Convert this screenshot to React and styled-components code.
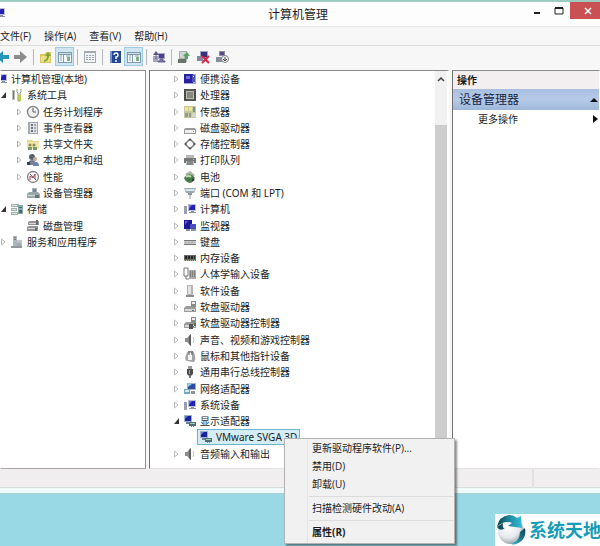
import styled, { createGlobalStyle } from "styled-components";

const GlobalStyle = createGlobalStyle`
    * {
        box-sizing: border-box;
    }
    body {
        margin: 0;
        background-color: #98d9e5;
        color: #1c1c1c;
        font-family: "Open Sans", "Noto Sans CJK SC", sans-serif;
        font-size: 10px;
        line-height: 16px;
    }
    button {
        padding: 0;
        border: 0;
        background: none;
        color: inherit;
        font: inherit;
    }
    svg {
        display: block;
        flex: none;
    }
`;

const Desktop = styled.div`
    position: relative;
    display: flex;
    flex-direction: column;
    min-height: 100vh;
    padding-bottom: 52px;
    overflow: hidden;
`;

const Window = styled.main`
    flex: 1;
    display: flex;
    flex-direction: column;
    border-top: 2px solid #9ccbc0;
    border-bottom: 1px solid #a9cfca;
    background-color: #f7f7f8;
`;

const TitleBar = styled.header`
    display: grid;
    grid-template-columns: 1fr auto 1fr;
    height: 25px;
    border-bottom: 1px solid #e6e6e6;
    background-color: #fdfdfd;
    h1 {
        margin: 0;
        padding-right: 4px;
        font-size: 12px;
        font-weight: 400;
        line-height: 25px;
    }
    .app-icon {
        margin: 4px 0 0 -8px;
    }
    .controls {
        display: flex;
        justify-content: flex-end;
        align-items: flex-start;
    }
`;

const WindowButton = styled.button`
    display: grid;
    place-items: center;
    width: ${(props) => (props.$close ? "30px" : "22px")};
    height: 17px;
    padding-left: ${(props) => (props.$close ? "6px" : "0")};
    background-color: ${(props) => (props.$close ? "#c95154" : "transparent")};
`;

const MenuBar = styled.nav`
    display: flex;
    gap: 13px;
    height: 19px;
    border-bottom: 1px solid #dcdcdc;
    button {
        line-height: 18px;
    }
`;

const ToolBar = styled.div`
    display: flex;
    align-items: center;
    height: 24px;
    padding-bottom: 3px;
    margin-left: -8px;
`;

const ToolButton = styled.button`
    display: grid;
    place-items: center;
    width: 19px;
    height: 19px;
    border: 1px solid ${(props) => (props.$active ? "#9fcbe2" : "transparent")};
    background-color: ${(props) => (props.$active ? "#cfe6f2" : "transparent")};
`;

const ToolDivider = styled.span`
    width: 1px;
    height: 16px;
    margin: 0 2px 0 3px;
    background-color: #b4b8bd;
`;

const Panes = styled.div`
    flex: 1;
    display: flex;
    gap: 3px;
`;

const Pane = styled.section`
    display: flex;
    flex: ${(props) => props.$flex};
    min-width: 0;
    padding-bottom: 6px;
    padding-left: ${(props) => props.$inset || "0"};
    border-top: 1px solid #8b8b8b;
    border-right: 1px solid ${(props) => (props.$rightEdge ? "#8b8b8b" : "#ffffff")};
    border-left: 1px solid ${(props) => (props.$leftEdge ? "#6f6f6f" : "#ffffff")};
    border-bottom: 1px solid ${(props) => (props.$rightEdge ? "#a8a8a8" : "#e4e4e4")};
    background-color: #ffffff;
    overflow: hidden;
`;

const Tree = styled.ul`
    flex: 1;
    display: grid;
    grid-template-rows: repeat(24, 1fr);
    min-width: 0;
    margin: 0;
    padding: 0;
    font-family: "Noto Sans", "Noto Sans CJK SC", sans-serif;
    list-style: none;
`;

const TreeRow = styled.li`
    display: flex;
    align-items: center;
    height: 16px;
    padding-left: ${(props) => props.$level * 16}px;
    white-space: nowrap;
`;

const ShiftedTree = styled(Tree)`
    margin-left: -19px;
`;

const Expander = styled.span`
    flex: none;
    width: 12px;
    padding-left: 3px;
`;

const RowLabel = styled.span`
    display: flex;
    align-items: center;
    gap: 3px;
    height: 16px;
    margin-left: ${(props) => (props.$selected ? "-2px" : "0")};
    padding: ${(props) => (props.$selected ? "0 2px 0 1px" : "0")};
    border: ${(props) => (props.$selected ? "1px solid #69b7cd" : "0")};
    background-color: ${(props) => (props.$selected ? "#d3ecf5" : "transparent")};
`;

const ScrollBar = styled.div`
    display: flex;
    flex-direction: column;
    width: 12px;
    margin: 0 1px -6px 0;
    background-color: #f1f1f1;
    button {
        display: grid;
        place-items: center;
        height: 17px;
    }
    .track {
        flex: 1;
        padding: 37px 0 26px;
    }
    .thumb {
        height: 100%;
        background-color: #cdcdcd;
    }
`;

const Actions = styled.div`
    flex: 1;
    h2 {
        margin: 0;
        padding-left: 4px;
        background-color: #f3eff0;
        font-size: 10px;
        line-height: 18px;
    }
`;

const ActionGroup = styled.button`
    display: flex;
    align-items: center;
    justify-content: space-between;
    width: 100%;
    height: 21px;
    padding: 0 1px 0 6px;
    background: linear-gradient(#a9bfdf, #b6cae8 50%, #9db8da);
    color: #16263f;
    font-size: 12px;
`;

const ActionItem = styled.button`
    display: flex;
    align-items: center;
    justify-content: space-between;
    width: 100%;
    height: 18px;
    padding: 0 1px 0 25px;
`;

const StatusBar = styled.footer`
    display: flex;
    height: 24px;
    border-bottom: 5px solid #effbfb;
    background-color: #f0eeef;
    box-shadow: inset 0 -1px #d6dcdb;
    span {
        flex: 1;
        border-right: 2px solid #e2e0e1;
    }
    span:last-child {
        flex: none;
        width: 66px;
        border: 0;
    }
`;

const ContextMenu = styled.div`
    position: absolute;
    top: 438px;
    left: 284px;
    display: flex;
    flex-direction: column;
    width: 171px;
    padding-bottom: 2px;
    border: 1px solid #b2b2b2;
    background: linear-gradient(90deg, #f1f1f1 22px, #e4e4e4 22px, #e4e4e4 23px, #f1f1f1 23px);
    box-shadow: 2px 2px 2px rgba(0, 0, 0, 0.45);
    hr {
        width: 145px;
        height: 1px;
        margin: 3px 0 2px 24px;
        border: 0;
        background-color: #dcdcdc;
    }
`;

const MenuItem = styled.button`
    && {
        padding-left: 27px;
        font-weight: ${(props) => (props.$strong ? "700" : "400")};
        line-height: 18px;
        text-align: left;
    }
`;

const Brand = styled.div`
    position: absolute;
    right: 0;
    bottom: 0;
    display: flex;
    align-items: center;
    gap: 2px;
    width: 105px;
    height: 32px;
    padding-left: 1px;
    background-color: #ffffff;
    color: #159cb9;
    font-size: 18px;
    font-weight: 700;
    white-space: nowrap;
    overflow: hidden;
`;

const monitor = (
    <>
        <path d="M5 2h8v7H5z" fill="#b9bfd6" />
        <path d="M6 3h6v5H6z" fill="#2420b4" />
        <path d="M6 3h3l-3 4z" fill="#6c6be0" />
        <path d="M8 9h3v1h2v1H6v-1h2z" fill="#8b90a4" />
    </>
);

const adapter = (
    <>
        <path d="M1 1h8v7H1z" fill="#9fb0c8" />
        <path d="M2 2h6v5H2z" fill="#15219e" />
        <path d="M2 2h3L2 5z" fill="#5a78dc" />
        <path d="M3 8h4v2H3z" fill="#70808e" />
        <path d="M6 8h7v4H6z" fill="#536b73" />
        <path d="M7 9h5v1H7z" fill="#9fd0b4" />
        <path d="M8 12h1v1H8zM10 12h1v1h-1z" fill="#9b8a40" />
    </>
);

const floppy = (
    <>
        <path d="M1 8l2-2h9l1 2v4H1z" fill="#9b9b9b" />
        <path d="M2 9h10v2H2z" fill="#d8d8d8" />
        <path d="M8 1h5v6H8z" fill="#8a8a8a" />
        <path d="M9 2h3v2H9z" fill="#eeeeee" />
        <path d="M9 10h2v1H9z" fill="#5d7b63" />
    </>
);

const speaker = (
    <>
        <path d="M2 5h2l4-4v12L4 9H2z" fill="#8d8d8d" />
        <path d="M6 3l2-2v12l-2-2z" fill="#5e5e5e" />
        <path d="M10 4q2 3 0 6" fill="none" stroke="#c4c4c4" />
    </>
);

const icons = {
    computer: (
        <>
            {monitor}
            <path d="M1 4h3v8H1z" fill="#9a9fb0" />
            <path d="M2 5h1v1H2z" fill="#46c16b" />
        </>
    ),
    tools: (
        <>
            <path d="M2 2h3v10H2z" fill="#b7bcb7" />
            <path d="M3 3h1v8H3z" fill="#6f7a72" />
            <path d="M7 1v3l1 1v8h2V5l1-1V1" fill="none" stroke="#8d948e" />
            <path d="M8 7h3v6H8z" fill="#b9c64d" />
        </>
    ),
    clock: (
        <>
            <circle cx="7" cy="7" r="5.5" fill="#f2f2f2" stroke="#858585" strokeWidth="1.4" />
            <path d="M7 3v4h3" fill="none" stroke="#555" />
        </>
    ),
    events: (
        <>
            <path d="M2 1h10v12H2z" fill="#a4a9b2" />
            <path d="M4 2h7v10H4z" fill="#e0e3ea" />
            <path d="M5 3h2v2H5zM5 6h2v2H5zM5 9h2v2H5z" fill="#6f7483" />
            <path d="M8 4h2M8 7h2M8 10h2" stroke="#777" />
        </>
    ),
    folder: (
        <>
            <path d="M1 3h5l1 1h6v8H1z" fill="#e5d98a" />
            <path d="M1 5h12v7H1z" fill="#efe7ad" />
            <circle cx="4" cy="8" r="1.5" fill="#8d8a58" />
            <circle cx="8" cy="8" r="1.5" fill="#8d8a58" />
            <path d="M2 10h4v3H2zM7 10h4v3H7z" fill="#7c9a6a" />
        </>
    ),
    users: (
        <>
            <circle cx="6" cy="4" r="3" fill="#59636c" />
            <circle cx="9" cy="6" r="2" fill="#c4ac96" />
            <path d="M2 12q0-5 4-5t4 5z" fill="#777f98" />
            <path d="M7 13q0-4 3-4t3 4z" fill="#6b84ad" />
            <path d="M1 9h3v3H1z" fill="#333f6b" />
        </>
    ),
    performance: (
        <>
            <circle cx="7" cy="7" r="5.5" fill="#fafafa" stroke="#8b8086" strokeWidth="1.3" />
            <path d="M4 10V6l3 2 2-4v5" fill="none" stroke="#a3475b" />
            <path d="M4 4l6 6" stroke="#6c6c78" />
        </>
    ),
    device: (
        <>
            <path d="M6 2h5v6H6z" fill="#a5b1b4" />
            <path d="M7 3h3v3H7z" fill="#728a95" />
            <path d="M1 8l2-2h9l2 2v4H1z" fill="#9aa8aa" />
            <path d="M2 9h8v1H2z" fill="#d6dede" />
            <path d="M9 9h4v3H9z" fill="#68777a" />
        </>
    ),
    storage: (
        <>
            <path d="M1 2h8v3H1zM1 6h6v3H1zM1 10h7v3H1z" fill="#9cb3ad" />
            <path d="M2 3h5v1H2zM2 7h4v1H2zM2 11h5v1H2z" fill="#dce8e4" />
            <path d="M8 3h5v9H8z" fill="#8ca9a7" />
            <path d="M9 5h3v1H9zM9 8h3v3H9z" fill="#426d6b" />
        </>
    ),
    disks: (
        <>
            <path d="M2 3l2-1h9v4H2zM1 8l2-1h9v5H1z" fill="#949494" />
            <path d="M3 4h7v1H3zM2 9h7v1H2z" fill="#d9d9d9" />
            <path d="M10 1h2v5h-2zM9 9h2v3H9z" fill="#696969" />
        </>
    ),
    services: (
        <>
            <path d="M3 1h4v10H3z" fill="#afb5b9" />
            <path d="M4 2h2v1H4zM4 4h2v1H4z" fill="#737a80" />
            <path d="M7 5h5v8H7z" fill="#c2c7cb" />
            <circle cx="9" cy="10" r="2.5" fill="#a2abb0" />
            <path d="M1 11h11v2H1z" fill="#92999e" />
        </>
    ),
    portable: (
        <>
            <path d="M1 2h12v10H1z" fill="#a1a3d4" />
            <path d="M1 2h9v9H1z" fill="#27219f" />
            <path d="M3 4h4v3H3z" fill="#6f70dd" />
            <path d="M9 3h3v7H9z" fill="#4f54ac" />
            <path d="M10 4h1v1h-1z" fill="#f4f4f4" />
        </>
    ),
    cpu: (
        <>
            <path d="M1 1h12v12H1z" fill="#5a5a55" />
            <path d="M3 3h8v8H3z" fill="#b7b8b1" />
            <path d="M4 4h6v6H4z" fill="#87887f" />
            <path d="M2 1v12M12 1v12" stroke="#252525" strokeDasharray="1 1" />
        </>
    ),
    sensor: (
        <>
            <path d="M1 1h12v12H1z" fill="#c4c8a5" />
            <path d="M2 2h3v4H2zM6 2h3v4H6z" fill="#efe97b" />
            <path d="M10 2h2v5h-2z" fill="#849182" />
            <path d="M2 8h3v4H2zM6 8h2v4H6z" fill="#939d89" />
            <path d="M9 8h4v4H9z" fill="#d7d7c8" />
        </>
    ),
    drive: (
        <>
            <path d="M1 9q0-2 2-2h8q2 0 2 2v4H1z" fill="#999" />
            <path d="M2 9h10v3H2z" fill="#eeeeee" />
            <path d="M10 10h1v1h-1z" fill="#55a45c" />
        </>
    ),
    controller: (
        <>
            <path d="M7 1l6 6-6 6-6-6z" fill="#777" />
            <path d="M7 3l4 4-4 4-4-4z" fill="#ffffff" />
            <path d="M2 7h2M10 7h2M7 2v2M7 10v2" stroke="#333" />
        </>
    ),
    printer: (
        <>
            <path d="M3 2h8v4H3z" fill="#b9b9b9" />
            <path d="M1 5h12v5H1z" fill="#747874" />
            <path d="M3 8h8v4H3z" fill="#b8beb8" />
            <path d="M4 9h6M4 11h6" stroke="#555" />
            <path d="M10 6h1v1h-1z" fill="#91db94" />
        </>
    ),
    battery: (
        <>
            <path d="M2 4l5-3 5 4-4 4z" fill="#a8b5a8" />
            <path d="M1 8q3-5 8-3l3 3-4 5q-5 0-7-5z" fill="#487a49" />
            <path d="M3 7q3-2 5 0" fill="none" stroke="#b9deb5" strokeWidth="2" />
            <path d="M9 8l3 2-3 2" fill="#343d35" />
        </>
    ),
    port: (
        <>
            <path d="M1 2h12l-2 5H3z" fill="#9ca9b1" />
            <path d="M2 3h10l-1 2H3z" fill="#d5e5ec" />
            <path d="M5 7h4v2H5z" fill="#8c979e" />
            <path d="M6 9h2v4H6z" fill="#c3ccd0" />
        </>
    ),
    monitor: (
        <>
            <path d="M1 1h8v9H1z" fill="#1d1797" />
            <path d="M2 2h3L2 6z" fill="#5d5ed8" />
            <path d="M7 5h6v5H7z" fill="#4b4ebb" />
            <path d="M3 10h4v2H3zM8 10h5v2H8z" fill="#8c91a4" />
        </>
    ),
    keyboard: (
        <>
            <path d="M1 5h12v5H1z" fill="#c9c9c9" />
            <path d="M1 5.5h12M1 9.5h12" stroke="#777" />
            <path d="M2 7.5h10" stroke="#a5a5a5" strokeDasharray="2 1" />
        </>
    ),
    memory: (
        <>
            <path d="M1 4h12v6H1z" fill="#666b66" />
            <path d="M2 5h2v3H2zM5 5h2v3H5zM8 5h2v3H8zM11 5h1v3h-1z" fill="#252825" />
            <path d="M1 9.5h12" stroke="#bcbcaa" strokeDasharray="1 1" />
        </>
    ),
    hid: (
        <>
            <path d="M1 1h4v8H1z" fill="none" stroke="#777" />
            <path d="M3 9v3h3" fill="none" stroke="#777" />
            <path d="M6 3h7v9H6z" fill="#aaaaaa" />
            <path d="M7 5h5M7 7h5M7 9h5" stroke="#555" strokeDasharray="1 1" />
        </>
    ),
    software: (
        <>
            <path d="M4 1h6v11H4z" fill="#b4b4b4" />
            <path d="M5 2h3v8H5z" fill="#e2e2e2" />
            <path d="M3 11h8v2H3z" fill="#8c8c8c" />
        </>
    ),
    floppy,
    floppyController: (
        <>
            {floppy}
            <path d="M6 8h4v5H6z" fill="#555" />
            <path d="M11 7h2v3h-2z" fill="#4e7158" />
        </>
    ),
    speaker,
    mouse: (
        <>
            <path d="M4 12q-3-1-1-6t4-4q4-1 5 5t-2 6z" fill="#a2a2a2" />
            <path d="M5 11V5q2-3 4 0v6z" fill="#f5f5f5" />
            <path d="M6 2v4M9 2v4" stroke="#555" />
        </>
    ),
    usb: (
        <>
            <path d="M5 1h4v3H5z" fill="#999" />
            <path d="M4 4h6v5l-2 2H6L4 9z" fill="#4d4d4d" />
            <path d="M7 10v3" stroke="#777" strokeWidth="2" />
            <path d="M6 5h1v4H6z" fill="#9b9b9b" />
        </>
    ),
    network: (
        <>
            <path d="M4 1h9v7H4z" fill="#9fb6c8" />
            <path d="M5 2h7v5H5z" fill="#2b4aa5" />
            <path d="M5 2h4L5 5z" fill="#8fd0ec" />
            <path d="M1 7h6v5H1z" fill="#71a6bb" />
            <path d="M2 8h4v2H2z" fill="#d0edf1" />
            <path d="M8 9h4v3H8z" fill="#8c9498" />
        </>
    ),
    adapter,
    back: <path d="M14 5H8V1L1 7l7 6V9h6z" fill="#2796bd" />,
    forward: <path d="M0 5h6V1l7 6-7 6V9H0z" fill="#8b8b8b" />,
    up: (
        <>
            <path d="M1 4h5l1-2h5v11H1z" fill="#d9c65c" />
            <path d="M2 6h9v6H2z" fill="#f0df82" />
            <path d="M5 10q3 0 3-4H6l3-4 3 4h-2q0 5-5 6z" fill="#7aa23a" />
        </>
    ),
    panes: (
        <>
            <path d="M0 2h14v11H0z" fill="#7f9aaa" />
            <path d="M1 5h4v7H1zM6 5h7v7H6z" fill="#f6fbfd" />
            <path d="M1 3h12v1H1z" fill="#cce0e8" />
            <path d="M2 6h2M2 8h2M2 10h2M8 6h4" stroke="#87a3ae" />
            <path d="M9 7h3v4H9z" fill="#7fb183" />
        </>
    ),
    list: (
        <>
            <path d="M1 1h12v12H1z" fill="#a5a9b1" />
            <path d="M2 3h10v9H2z" fill="#f2f3f5" />
            <path d="M3 5.5h8M3 7.5h8M3 9.5h8" stroke="#9aa3b5" strokeDasharray="2 1" />
        </>
    ),
    help: (
        <>
            <path d="M2 1h11v12H2z" fill="#24458f" />
            <path d="M2 1h2v12H2z" fill="#7895c9" />
            <path d="M6 5q0-2 2-2t2 2-2 2v2M8 10v2" fill="none" stroke="#ffffff" strokeWidth="1.4" />
        </>
    ),
    scan: (
        <>
            <path d="M1 6h5v6H1zM6 3h7v6H6z" fill="#a2a5be" />
            <path d="M7 4h5v4H7z" fill="#4c428d" />
            <path d="M4 4v5M8 9h3v2h2v1H6v-1h2z" fill="#7d7f9a" stroke="#665c8f" />
            <path d="M1 5l3-4 3 4z" fill="#5d548c" />
        </>
    ),
    update: (
        <>
            <path d="M2 1h8v11H2z" fill="#a9b4a9" />
            <path d="M3 3h6M3 5h6M3 7h4" stroke="#f5f5f5" />
            <path d="M1 9h8v4H1z" fill="#657568" />
            <path d="M8 9V6H6l4-4 3 4h-2v3z" fill="#59a267" />
        </>
    ),
    uninstall: (
        <>
            <path d="M4 1h8v7H4z" fill="#a2a5be" />
            <path d="M5 2h6v5H5z" fill="#35307f" />
            <path d="M1 6h6v5H1z" fill="#85889c" />
            <path d="M6 6l7 7M13 6l-7 7" stroke="#d42644" strokeWidth="2" />
        </>
    ),
    disable: (
        <>
            <path d="M4 1h6v5H4zM1 7h9v5H1z" fill="#8b8ba1" />
            <path d="M5 2h4v3H5z" fill="#574c8c" />
            <circle cx="10" cy="9" r="3.5" fill="#f4f4f4" stroke="#858585" />
            <path d="M10 7v4M8 9l2 2 2-2" fill="none" stroke="#444" />
        </>
    ),
};

function Icon({ name }) {
    return (
        <svg width="14" height="14" viewBox="0 0 14 14" aria-hidden="true">
            {icons[name]}
        </svg>
    );
}

const consoleTree = [
    { label: "计算机管理(本地)", icon: "computer", level: 0 },
    { label: "系统工具", icon: "tools", level: 1, state: "open" },
    { label: "任务计划程序", icon: "clock", level: 2, state: "closed" },
    { label: "事件查看器", icon: "events", level: 2, state: "closed" },
    { label: "共享文件夹", icon: "folder", level: 2, state: "closed" },
    { label: "本地用户和组", icon: "users", level: 2, state: "closed" },
    { label: "性能", icon: "performance", level: 2, state: "closed" },
    { label: "设备管理器", icon: "device", level: 2 },
    { label: "存储", icon: "storage", level: 1, state: "open" },
    { label: "磁盘管理", icon: "disks", level: 2 },
    { label: "服务和应用程序", icon: "services", level: 1, state: "closed" },
];

const deviceTree = [
    { label: "便携设备", icon: "portable", level: 0, state: "closed" },
    { label: "处理器", icon: "cpu", level: 0, state: "closed" },
    { label: "传感器", icon: "sensor", level: 0, state: "closed" },
    { label: "磁盘驱动器", icon: "drive", level: 0, state: "closed" },
    { label: "存储控制器", icon: "controller", level: 0, state: "closed" },
    { label: "打印队列", icon: "printer", level: 0, state: "closed" },
    { label: "电池", icon: "battery", level: 0, state: "closed" },
    { label: "端口 (COM 和 LPT)", icon: "port", level: 0, state: "closed" },
    { label: "计算机", icon: "computer", level: 0, state: "closed" },
    { label: "监视器", icon: "monitor", level: 0, state: "closed" },
    { label: "键盘", icon: "keyboard", level: 0, state: "closed" },
    { label: "内存设备", icon: "memory", level: 0, state: "closed" },
    { label: "人体学输入设备", icon: "hid", level: 0, state: "closed" },
    { label: "软件设备", icon: "software", level: 0, state: "closed" },
    { label: "软盘驱动器", icon: "floppy", level: 0, state: "closed" },
    { label: "软盘驱动器控制器", icon: "floppyController", level: 0, state: "closed" },
    { label: "声音、视频和游戏控制器", icon: "speaker", level: 0, state: "closed" },
    { label: "鼠标和其他指针设备", icon: "mouse", level: 0, state: "closed" },
    { label: "通用串行总线控制器", icon: "usb", level: 0, state: "closed" },
    { label: "网络适配器", icon: "network", level: 0, state: "closed" },
    { label: "系统设备", icon: "computer", level: 0, state: "closed" },
    { label: "显示适配器", icon: "adapter", level: 0, state: "open" },
    { label: "VMware SVGA 3D", icon: "adapter", level: 1, selected: true },
    { label: "音频输入和输出", icon: "speaker", level: 0, state: "closed" },
];

const toolGroups = [
    [{ icon: "back", title: "后退" }, { icon: "forward", title: "前进" }],
    [{ icon: "up", title: "向上" }, { icon: "panes", title: "显示/隐藏控制台树", active: true }],
    [{ icon: "list", title: "属性" }],
    [{ icon: "help", title: "帮助" }, { icon: "panes", title: "显示/隐藏操作窗格", active: true }],
    [{ icon: "scan", title: "扫描检测硬件改动" }],
    [
        { icon: "update", title: "更新驱动程序软件" },
        { icon: "uninstall", title: "卸载" },
        { icon: "disable", title: "禁用" },
    ],
];

function TreeItems({ items }) {
    return items.map((item) => (
        <TreeRow key={item.label} $level={item.level}>
            <Expander>
                {item.state === "closed" && (
                    <svg width="5" height="8" viewBox="0 0 5 8">
                        <path d="M.5 1l3.5 3L.5 7z" fill="#fff" stroke="#b9b9b9" />
                    </svg>
                )}
                {item.state === "open" && (
                    <svg width="5" height="6" viewBox="0 0 5 6">
                        <path d="M5 0v6H0z" fill="#333" />
                    </svg>
                )}
            </Expander>
            <RowLabel $selected={item.selected}>
                <Icon name={item.icon} />
                {item.label}
            </RowLabel>
        </TreeRow>
    ));
}

function Header() {
    return (
        <TitleBar>
            <div className="app-icon">
                <Icon name="computer" />
            </div>
            <h1>计算机管理</h1>
            <div className="controls">
                <WindowButton aria-label="最小化">
                    <svg width="8" height="8" viewBox="0 0 8 8">
                        <path d="M1 5h6v2H1z" fill="#222" />
                    </svg>
                </WindowButton>
                <WindowButton aria-label="最大化">
                    <svg width="10" height="8" viewBox="0 0 10 8">
                        <path d="M1 1h8v6H1z" fill="none" stroke="#222" />
                        <path d="M1 1h8" stroke="#222" strokeWidth="2" />
                    </svg>
                </WindowButton>
                <WindowButton $close aria-label="关闭">
                    <svg width="8" height="8" viewBox="0 0 8 8">
                        <path d="M1 1l6 6M7 1L1 7" stroke="#fff" strokeWidth="1.5" />
                    </svg>
                </WindowButton>
            </div>
        </TitleBar>
    );
}

function Tools() {
    return (
        <ToolBar>
            {toolGroups.map((group, index) => [
                index > 0 && <ToolDivider key={index} />,
                ...group.map((tool) => (
                    <ToolButton key={tool.title} $active={tool.active} aria-label={tool.title}>
                        <Icon name={tool.icon} />
                    </ToolButton>
                )),
            ])}
        </ToolBar>
    );
}

function ActionsPane() {
    return (
        <Actions>
            <h2>操作</h2>
            <ActionGroup>
                设备管理器
                <svg width="8" height="6" viewBox="0 0 8 6">
                    <path d="M0 5l4-4 4 4z" fill="#111" />
                </svg>
            </ActionGroup>
            <ActionItem>
                更多操作
                <svg width="5" height="8" viewBox="0 0 5 8">
                    <path d="M0 0l5 4-5 4z" fill="#111" />
                </svg>
            </ActionItem>
        </Actions>
    );
}

function BrandMark() {
    return (
        <Brand>
            <svg width="31" height="32" viewBox="0 0 31 32" aria-hidden="true">
                <defs>
                    <radialGradient id="ball" cx="40%" cy="35%" r="70%">
                        <stop offset="0" stopColor="#ffffff" />
                        <stop offset="0.6" stopColor="#e6e9ec" />
                        <stop offset="1" stopColor="#8c979e" />
                    </radialGradient>
                    <linearGradient id="sweep" x1="0" y1="0" x2="1" y2="0">
                        <stop offset="0" stopColor="#0c4250" />
                        <stop offset="0.5" stopColor="#1f8aa2" />
                        <stop offset="1" stopColor="#35bdd6" />
                    </linearGradient>
                    <linearGradient id="edge" x1="0" y1="1" x2="1" y2="0">
                        <stop offset="0" stopColor="#35bdd6" />
                        <stop offset="1" stopColor="#0b3d4b" />
                    </linearGradient>
                </defs>
                <circle cx="15" cy="17" r="13" fill="url(#ball)" />
                <path d="M1 13Q3 2 13 1q5 0 8 3l4-2 1 12-14-2 4-3Q8 6 1 13z" fill="url(#sweep)" />
                <path d="M29 14q2 12-9 16-3 1-5 0 9-3 9-12z" fill="url(#edge)" />
                <path d="M1 13q3 5 8 1-3 1-2-5z" fill="#124f5e" />
            </svg>
            系统天地
        </Brand>
    );
}

function App() {
    return (
        <Desktop>
            <GlobalStyle />
            <Window>
                <Header />
                <MenuBar>
                    <button>文件(F)</button>
                    <button>操作(A)</button>
                    <button>查看(V)</button>
                    <button>帮助(H)</button>
                </MenuBar>
                <Tools />
                <Panes>
                    <Pane $flex="0 0 146px" $rightEdge>
                        <ShiftedTree>
                            <TreeItems items={consoleTree} />
                        </ShiftedTree>
                    </Pane>
                    <Pane $flex="1" $leftEdge $inset="21px">
                        <Tree>
                            <TreeItems items={deviceTree} />
                        </Tree>
                        <ScrollBar>
                            <button aria-label="向上滚动">
                                <svg width="8" height="5" viewBox="0 0 8 5">
                                    <path d="M1 4l3-3 3 3" fill="none" stroke="#444" strokeWidth="1.5" />
                                </svg>
                            </button>
                            <div className="track">
                                <div className="thumb" />
                            </div>
                        </ScrollBar>
                    </Pane>
                    <Pane $flex="0 0 148px" $leftEdge>
                        <ActionsPane />
                    </Pane>
                </Panes>
                <StatusBar>
                    <span />
                    <span />
                </StatusBar>
            </Window>
            <ContextMenu role="menu">
                <MenuItem role="menuitem">更新驱动程序软件(P)...</MenuItem>
                <MenuItem role="menuitem">禁用(D)</MenuItem>
                <MenuItem role="menuitem">卸载(U)</MenuItem>
                <hr />
                <MenuItem role="menuitem">扫描检测硬件改动(A)</MenuItem>
                <hr />
                <MenuItem role="menuitem" $strong>属性(R)</MenuItem>
            </ContextMenu>
            <BrandMark />
        </Desktop>
    );
}

export default App;
